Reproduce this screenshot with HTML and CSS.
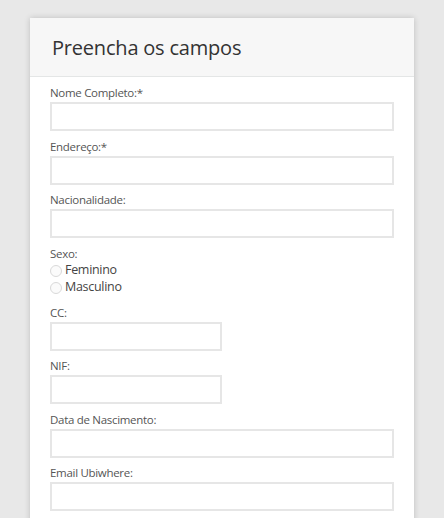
FILE: index.html
```html
<!DOCTYPE html>
<html lang="pt">
<head>
<meta charset="utf-8">
<title>Preencha os campos</title>
<link rel="stylesheet" href="styles.css">
</head>
<body>
<div class="card">
  <div class="card-header">
    <h1 class="title">Preencha os campos</h1>
  </div>
  <form class="card-body">
    <div class="field">
      <label class="label">Nome Completo:*</label>
      <input class="input" type="text">
    </div>
    <div class="field">
      <label class="label">Endereço:*</label>
      <input class="input" type="text">
    </div>
    <div class="field">
      <label class="label">Nacionalidade:</label>
      <input class="input" type="text">
    </div>
    <div class="field field-radio">
      <label class="label">Sexo:</label>
      <div class="radios">
        <label class="radio"><span class="radio-dot"></span>Feminino</label>
        <label class="radio"><span class="radio-dot"></span>Masculino</label>
      </div>
    </div>
    <div class="field">
      <label class="label">CC:</label>
      <input class="input input-short" type="text">
    </div>
    <div class="field">
      <label class="label">NIF:</label>
      <input class="input input-short" type="text">
    </div>
    <div class="field">
      <label class="label">Data de Nascimento:</label>
      <input class="input" type="text">
    </div>
    <div class="field">
      <label class="label">Email Ubiwhere:</label>
      <input class="input" type="text">
    </div>
  </form>
</div>
</body>
</html>
```

FILE: styles.css
```css
html, body {
  margin: 0;
  padding: 0;
}
body {
  background: #e8e8e8;
  font-family: "Open Sans", "Noto Sans", sans-serif;
  color: #555;
  padding: 18px 30px 0 30px;
  height: 518px;
  box-sizing: border-box;
  overflow: hidden;
}
.card {
  width: 384px;
  background: #fff;
  box-shadow: 0 0 6px rgba(0,0,0,0.18);
  height: 600px;
}
.card-header {
  height: 58px;
  background: #f7f7f7;
  border-bottom: 1px solid #e4e6e6;
  display: flex;
  align-items: center;
  padding-left: 22px;
}
.title {
  margin: 0;
  font-size: 20px;
  font-weight: 400;
  letter-spacing: -0.2px;
  color: #333;
  line-height: 28px;
  padding-top: 1px;
}
.card-body {
  display: flex;
  flex-direction: column;
  padding: 7px 20px 0 20px;
}
.field {
  display: flex;
  flex-direction: column;
  align-items: flex-start;
  margin-bottom: 6.5px;
}
.label {
  font-size: 11.5px;
  letter-spacing: -0.3px;
  line-height: 18px;
  color: #555;
}
.input {
  box-sizing: border-box;
  width: 344px;
  height: 29px;
  border: 2px solid #e6e6e6;
  margin: 0;
  padding: 0 6px;
  background: #fff;
  outline: none;
}
.input-short {
  width: 172px;
}
.field-radio {
  margin-bottom: 8.5px;
}
.radios {
  display: flex;
  flex-direction: column;
  margin-top: -1.5px;
}
.radio {
  display: flex;
  align-items: center;
  font-size: 12.5px;
  letter-spacing: -0.3px;
  line-height: 17px;
  color: #444;
}
.radio-dot {
  width: 12px;
  height: 12px;
  border: 1px solid #d9d9d9;
  border-radius: 50%;
  background: #fbfbfb;
  margin-right: 3px;
  margin-top: 2px;
  box-sizing: border-box;
}
```
